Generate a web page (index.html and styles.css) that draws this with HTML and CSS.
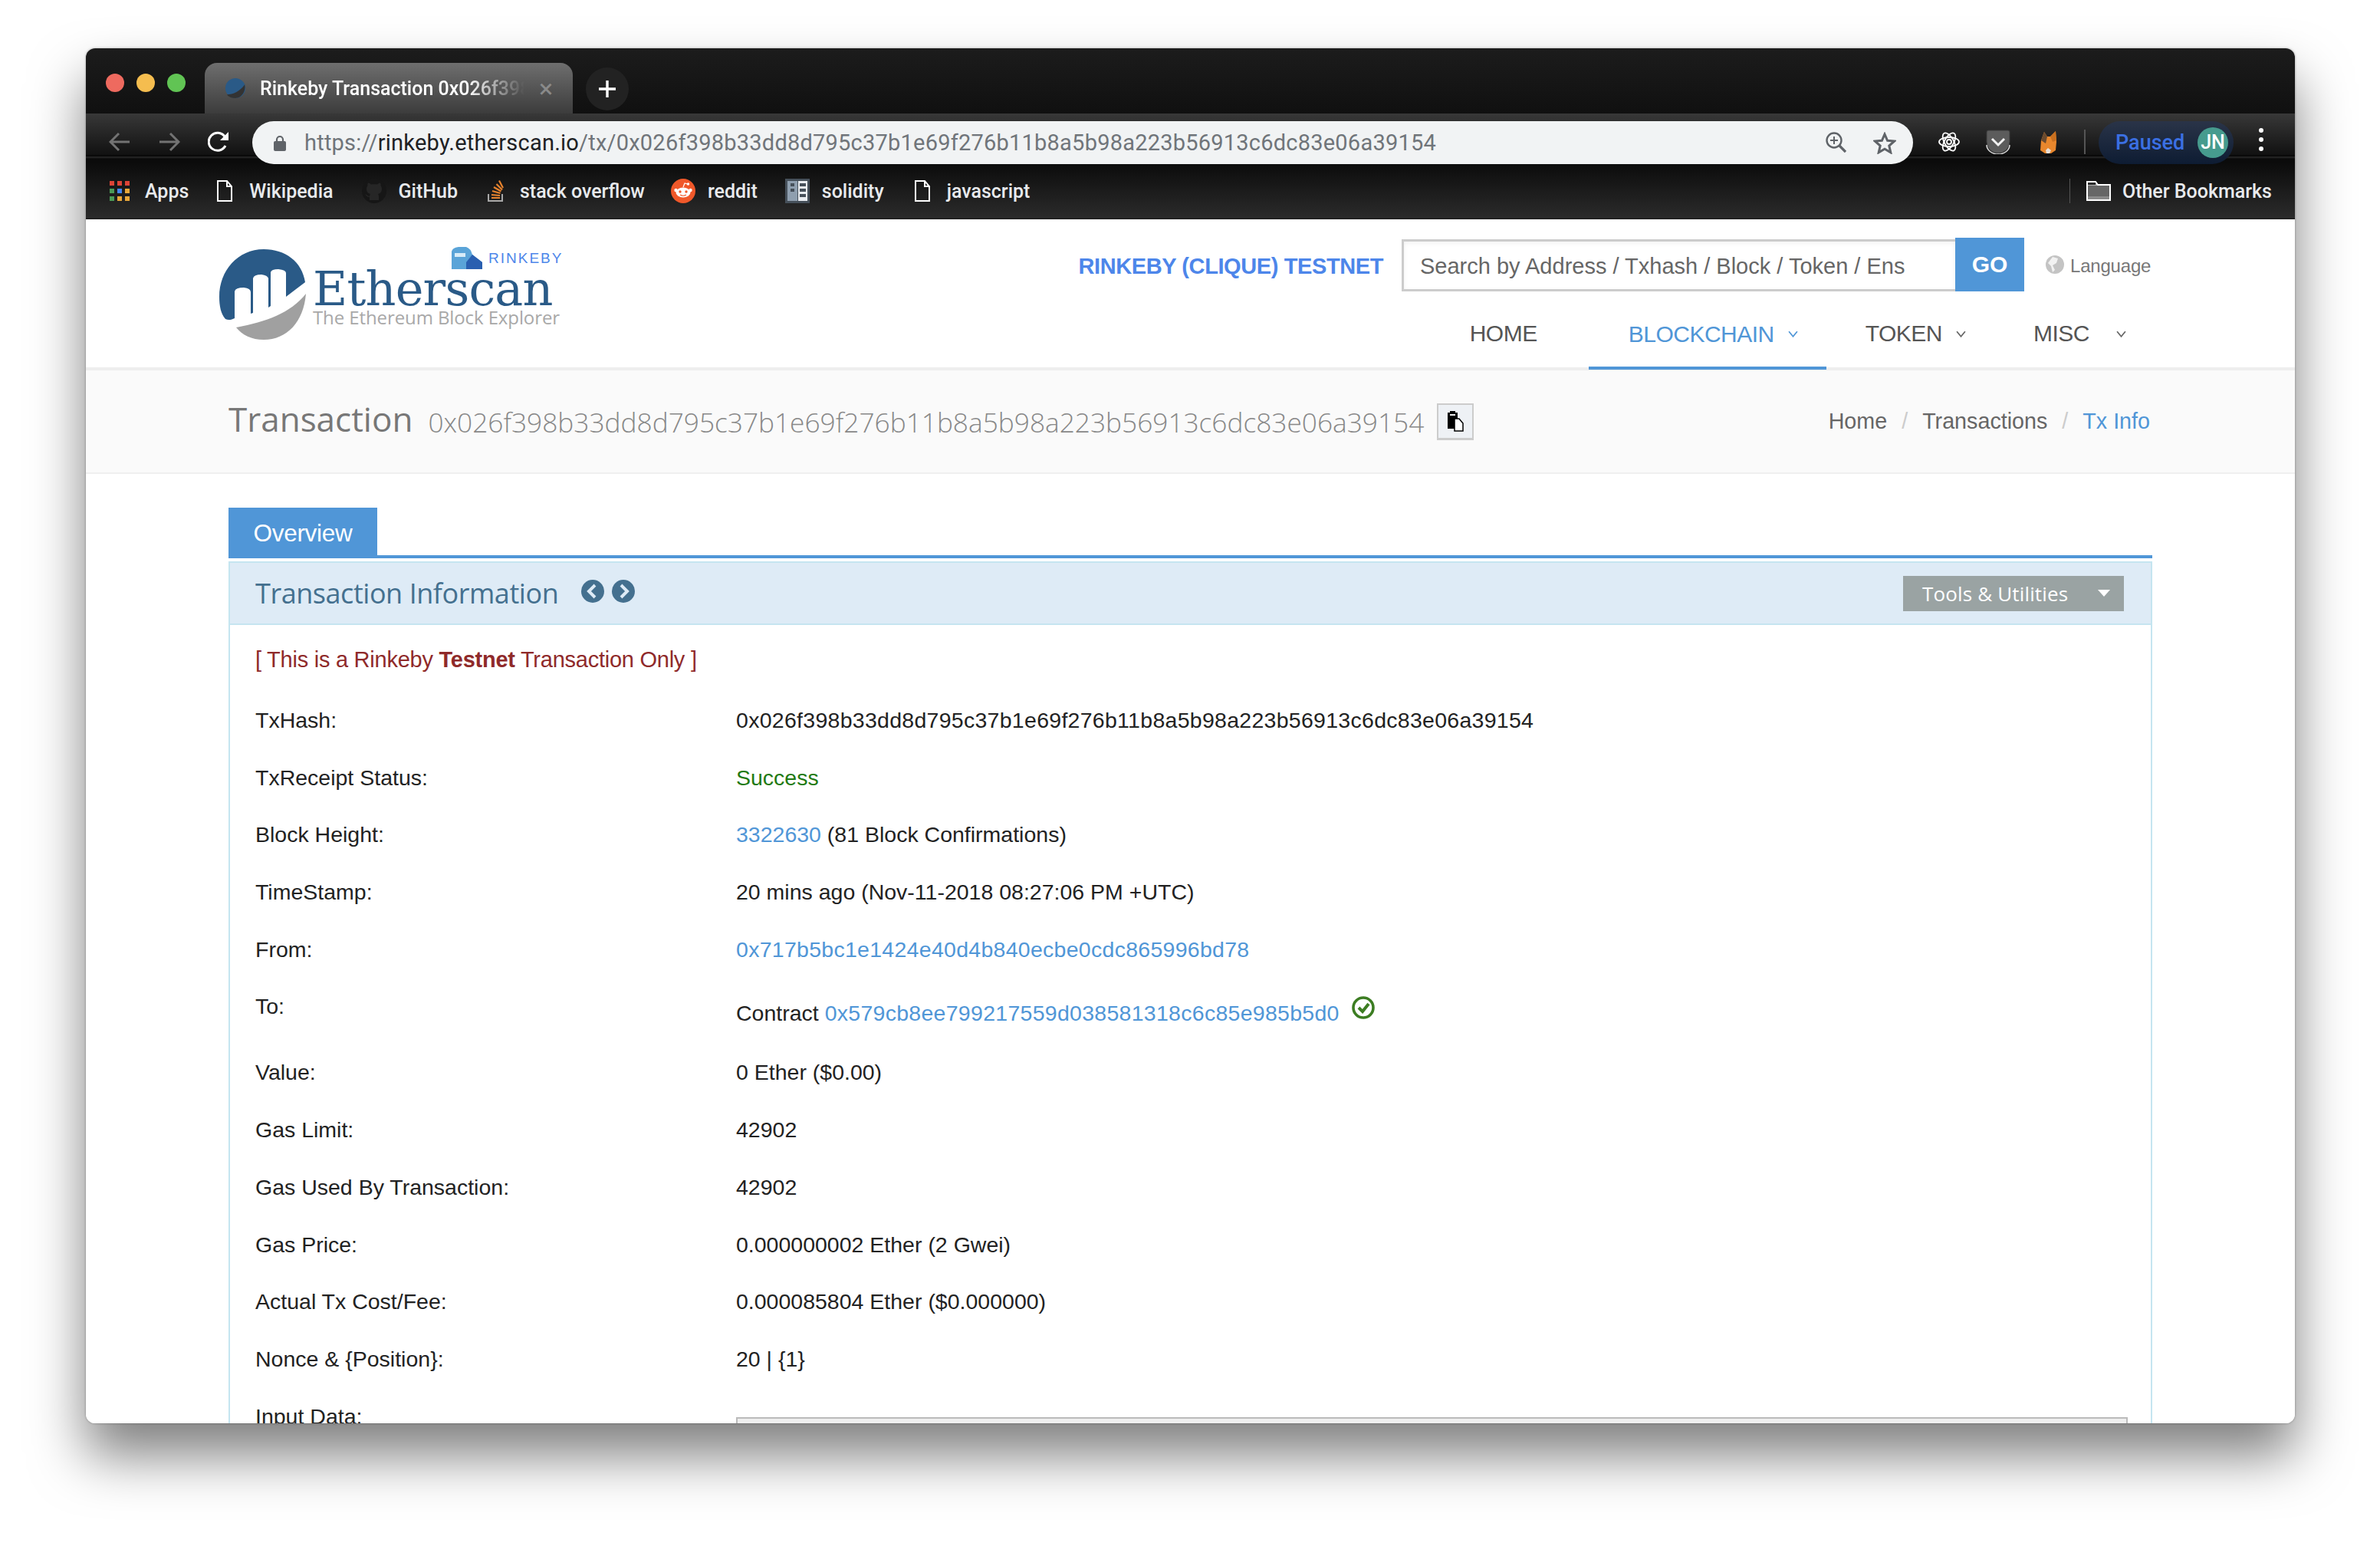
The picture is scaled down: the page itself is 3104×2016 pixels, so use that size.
FILE: index.html
```html
<!DOCTYPE html>
<html lang="en">
<head>
    <meta charset="UTF-8">
    <title>Rinkeby Transaction 0x026f398b33dd8d795c37b1e69f276b11b8a5b98a223b56913c6dc83e06a39154</title>
    <link rel="stylesheet" href="styles.css">
</head>
<body>
<div class="window">
    <div class="tabstrip">
        <span class="light red"></span>
        <span class="light yellow"></span>
        <span class="light green"></span>
        <div class="tab">
            <svg class="favicon" viewBox="0 0 30 32"><circle cx="15" cy="16" r="14" fill="#2a5a87"/><path d="M3 25C12 25 22 20 28 11C30 20 24 30 15 30C10 30 6 28 3 25Z" fill="#333"/></svg>
            <span class="tab-title">Rinkeby Transaction 0x026f398b33dd8d795c37b1e69f276b11b8</span>
            <span class="tab-close">×</span>
        </div>
        <div class="newtab"><svg viewBox="0 0 24 24" width="24" height="24"><path d="M12 1V23M1 12H23" stroke="#fff" stroke-width="3.4"/></svg></div>
    </div>

    <div class="toolbar">
        <svg class="tool-icon back" viewBox="0 0 28 26"><path d="M27 13H2M13 2L2 13L13 24" fill="none" stroke="#737373" stroke-width="3"/></svg>
        <svg class="tool-icon forward" viewBox="0 0 28 26"><path d="M1 13H26M15 2L26 13L15 24" fill="none" stroke="#737373" stroke-width="3"/></svg>
        <svg class="tool-icon reload" viewBox="0 0 28 28"><path d="M23 19A11.500 11.500 0 1 1 22 7" fill="none" stroke="#fff" stroke-width="3"/><path d="M27 1V12H16Z" fill="#fff"/></svg>
        <div class="omnibox">
            <svg class="lock" viewBox="0 0 16 21"><path d="M4 9V6A4 4 0 0 1 12 6V9" fill="none" stroke="#5f6368" stroke-width="2.200"/><rect y="8" width="16" height="13" rx="2" fill="#5f6368"/></svg>
            <span class="url"><span class="url-dim">https://</span>rinkeby.etherscan.io<span class="url-dim">/tx/0x026f398b33dd8d795c37b1e69f276b11b8a5b98a223b56913c6dc83e06a39154</span></span>
            <svg class="zoom-icon" viewBox="0 0 27 28"><circle cx="11" cy="11" r="9.500" fill="none" stroke="#5f6368" stroke-width="2.400"/><path d="M11 6V16M6 11H16" stroke="#5f6368" stroke-width="2"/><path d="M18 18L26 26" stroke="#5f6368" stroke-width="3.200"/></svg>
            <svg class="star-icon" viewBox="0 0 30 29"><path d="M15 3L18.600 11.300L27.500 12.100L20.800 18L22.800 26.800L15 22.200L7.200 26.800L9.200 18L2.500 12.100L11.400 11.300Z" fill="none" stroke="#5f6368" stroke-width="3"/></svg>
        </div>
        <svg class="ext react" viewBox="0 0 28 32"><g fill="none" stroke="#fff" stroke-width="1.800"><ellipse cx="14" cy="16" rx="13" ry="6"/><ellipse cx="14" cy="16" rx="13" ry="6" transform="rotate(60 14 16)"/><ellipse cx="14" cy="16" rx="13" ry="6" transform="rotate(120 14 16)"/><circle cx="14" cy="16" r="3"/></g></svg>
        <svg class="ext pocket" viewBox="0 0 32 32"><path d="M1 3Q1 1 3 1H29Q31 1 31 3V16A15 15 0 0 1 1 16Z" fill="#5c5c5c" stroke="#3a3a3a"/><path d="M1 20A15 12 0 0 0 31 20" fill="none" stroke="#ddd" stroke-width="1.500"/><path d="M8 12L16 20L24 12" fill="none" stroke="#f2f2f2" stroke-width="3"/></svg>
        <svg class="ext fox" viewBox="0 0 24 32"><path d="M2 27L3 14L7 3L11 9H15L22 2L23 16L22 27L16 31H8Z" fill="#e8872d"/><path d="M7 3L11 9L9 18L3 14Z" fill="#6b4b2f"/><path d="M22 2L15 9L18 16L23 14Z" fill="#c9701f"/><path d="M9 27L12 24L16 27L14 31H10Z" fill="#e8e0d8"/></svg>
        <span class="toolbar-sep"></span>
        <div class="paused">
            <span class="paused-label">Paused</span>
            <span class="avatar">JN</span>
        </div>
        <div class="menu-dots"><i></i><i></i><i></i></div>
    </div>

    <div class="bookmarks">
        <a class="bm bm-apps">
            <svg class="bm-icon" viewBox="0 0 26 26"><g>
                <rect width="6" height="6" fill="#db4437"/><rect x="10" width="6" height="6" fill="#db4437"/><rect x="20" width="6" height="6" fill="#db4437"/>
                <rect y="10" width="6" height="6" fill="#4b9b57"/><rect x="10" y="10" width="6" height="6" fill="#4285f4"/><rect x="20" y="10" width="6" height="6" fill="#e8a73a"/>
                <rect y="20" width="6" height="6" fill="#4b9b57"/><rect x="10" y="20" width="6" height="6" fill="#e8a73a"/><rect x="20" y="20" width="6" height="6" fill="#e8a73a"/>
            </g></svg>
            Apps
        </a>
        <a class="bm bm-wiki">
            <svg class="bm-icon doc" viewBox="0 0 20 28"><path d="M1 1H13L19 8V27H1Z M13 1V8H19" fill="none" stroke="#fff" stroke-width="2"/></svg>
            Wikipedia
        </a>
        <a class="bm bm-github">
            <svg class="bm-icon gh" viewBox="0 0 32 32"><circle cx="16" cy="16" r="16" fill="#161616"/><path d="M10 28V24C6 24 5 21 4 20C7 21 8 23 10 23C10 21 11 20 11 20C7 19 6 16 6 13C6 11 7 10 7.500 9C7 7 8 5.500 8 5.500C10 5.500 11 7 12 7.500C14 7 18 7 20 7.500C21 7 22 5.500 24 5.500C24 5.500 25 7 24.500 9C25 10 26 11 26 13C26 16 25 19 21 20C21.500 21 22 22 22 24V28Z" fill="#262626"/></svg>
            GitHub
        </a>
        <a class="bm bm-so">
            <svg class="bm-icon so" viewBox="0 0 22 30"><path d="M1 19V28H19V19" fill="none" stroke="#a8a8a8" stroke-width="2"/><path d="M5 24H16M5 20L16 21M6 15L16.500 18M8 10L17.500 15.500M11.500 6L19 13.500M15 1.500L20 11" fill="none" stroke="#e6822d" stroke-width="2.200"/></svg>
            stack overflow
        </a>
        <a class="bm bm-reddit">
            <svg class="bm-icon rd" viewBox="0 0 32 32"><circle cx="16" cy="16" r="16" fill="#f0582a"/><ellipse cx="16" cy="18" rx="9.500" ry="6.500" fill="#fff"/><circle cx="6.500" cy="15" r="2.200" fill="#fff"/><circle cx="25.500" cy="15" r="2.200" fill="#fff"/><circle cx="12" cy="17" r="1.700" fill="#f0582a"/><circle cx="20" cy="17" r="1.700" fill="#f0582a"/><path d="M12 21Q16 23.500 20 21" fill="none" stroke="#f0582a" stroke-width="1.200"/><path d="M16 11L18 6L22 7" fill="none" stroke="#fff" stroke-width="1.200"/><circle cx="22.500" cy="7" r="1.700" fill="#fff"/></svg>
            reddit
        </a>
        <a class="bm bm-sol">
            <svg class="bm-icon sol" viewBox="0 0 32 32"><rect width="32" height="32" fill="#46505a"/><rect x="3" y="3" width="13" height="26" fill="#8f9faf"/><rect x="17" y="3" width="12" height="26" fill="#e9edf1"/><rect x="7" y="6" width="5" height="4" fill="#46505a"/><rect x="7" y="13" width="5" height="4" fill="#46505a"/><rect x="19" y="6" width="8" height="4" fill="#46505a"/><rect x="19" y="13" width="8" height="4" fill="#46505a"/><rect x="19" y="20" width="8" height="4" fill="#46505a"/></svg>
            solidity
        </a>
        <a class="bm bm-js">
            <svg class="bm-icon doc" viewBox="0 0 20 28"><path d="M1 1H13L19 8V27H1Z M13 1V8H19" fill="none" stroke="#fff" stroke-width="2"/></svg>
            javascript
        </a>
        <span class="bm-sep"></span>
        <a class="bm bm-other">
            <svg class="bm-icon folder" viewBox="0 0 32 26"><path d="M1 25V1H12L15 5H31V25Z" fill="#666" stroke="#fff" stroke-width="2"/><path d="M2 5H15" stroke="#fff" stroke-width="1"/><rect x="2" y="6" width="28" height="14" fill="#666"/><rect x="2" y="2" width="10" height="3" fill="#2a2a2a"/><rect x="2" y="20" width="28" height="4" fill="#8a8a8a"/></svg>
            Other Bookmarks
        </a>
    </div>

    <div class="page">
        <div class="site-head">
            <div class="logo">
                <svg class="logo-mark" viewBox="0 0 114 118">
                    <path d="M112 43C108 16 86 0 58 0C24 0 0 28 0 62C0 74 2 84 8 91C12 93 16 92 20 90V55Q21 50 32 50Q41 51 41 56V84L44 83V38Q45 33 55 33Q63 34 64 38V76L67 74V30Q68 26 77 26Q87 27 87 31V62Q100 52 112 43Z" fill="#2a5a87"/>
                    <path d="M113 58C110 95 88 118 58 118C42 118 30 112 22 102C62 94 92 84 113 58Z" fill="#a0a0a0"/>
                </svg>
                <div class="logo-text">
                    <div class="logo-net">
                        <svg class="train" viewBox="0 0 42 30"><path d="M1 29V6Q2 1 10 0H20Q26 2 28 10L41 20V29Z" fill="#5aa4d8"/><path d="M20 20L28 10L41 20V29H20Z" fill="#2a5fb0"/><rect x="5" y="8" width="14" height="5" fill="#d7ecf8"/></svg>
                        <span>RINKEBY</span>
                    </div>
                    <div class="logo-name">Etherscan</div>
                    <div class="logo-tag">The Ethereum Block Explorer</div>
                </div>
            </div>
            <div class="head-right">
                <div class="head-top">
                    <span class="net-name">RINKEBY (CLIQUE) TESTNET</span>
                    <div class="search">
                        <div class="search-input">Search by Address / Txhash / Block / Token / Ens</div>
                        <div class="search-go">GO</div>
                    </div>
                    <div class="language">
                        <svg viewBox="0 0 24 24" width="24" height="24"><circle cx="12" cy="12" r="12" fill="#c4c4c4"/><path d="M9 2L16 4L14 10L9 13L12 19L9 22L7 14L3 10Z" fill="#f2f2f2"/></svg>
                        <span class="language-label">Language</span>
                    </div>
                </div>
                <nav class="menu">
                    <a class="menu-item home">HOME</a>
                    <a class="menu-item active blockchain">BLOCKCHAIN <svg class="chev" viewBox="0 0 12 8"><path d="M1 1L6 7L11 1" fill="none" stroke="#5096d7" stroke-width="1.600"/></svg></a>
                    <a class="menu-item token">TOKEN <svg class="chev" viewBox="0 0 12 8"><path d="M1 1L6 7L11 1" fill="none" stroke="#666" stroke-width="1.600"/></svg></a>
                    <a class="menu-item misc">MISC <svg class="chev" viewBox="0 0 12 8"><path d="M1 1L6 7L11 1" fill="none" stroke="#666" stroke-width="1.600"/></svg></a>
                </nav>
            </div>
        </div>

        <div class="crumbbar">
            <h1 class="page-title">Transaction</h1>
            <span class="page-hash">0x026f398b33dd8d795c37b1e69f276b11b8a5b98a223b56913c6dc83e06a39154</span>
            <button class="copy-btn"><svg viewBox="0 0 22 28" width="22" height="28"><path d="M1 3H14V24H1Z" fill="#000"/><rect x="4" y="1" width="7" height="4" fill="#000"/><rect x="4" y="5" width="7" height="2" fill="#eee"/><path d="M10 11H16L21 17V27H10Z" fill="#fff" stroke="#000" stroke-width="1.500"/></svg></button>
            <div class="crumbs">
                <a>Home</a><span class="crumb-sep">/</span><a>Transactions</a><span class="crumb-sep">/</span><a class="crumb-on">Tx Info</a>
            </div>
        </div>

        <div class="content">
            <div class="tabs"><span class="tab-overview">Overview</span></div>
            <div class="panel">
                <div class="panel-head">
                    <span class="panel-title">Transaction Information</span>
                    <svg class="round-nav first" viewBox="0 0 30 30"><circle cx="15" cy="15" r="15" fill="#44708f"/><path d="M18 7L10 15L18 23" fill="none" stroke="#deebf6" stroke-width="4"/></svg>
                    <svg class="round-nav" viewBox="0 0 30 30"><circle cx="15" cy="15" r="15" fill="#44708f"/><path d="M12 7L20 15L12 23" fill="none" stroke="#deebf6" stroke-width="4"/></svg>
                    <button class="tools-btn">Tools &amp; Utilities <i class="caret"></i></button>
                </div>
                <div class="panel-body">
                    <p class="testnet-note">[ This is a Rinkeby <b>Testnet</b> Transaction Only ]</p>
                    <div class="row"><div class="label">TxHash:</div><div class="value hash">0x026f398b33dd8d795c37b1e69f276b11b8a5b98a223b56913c6dc83e06a39154</div></div>
                    <div class="row"><div class="label">TxReceipt Status:</div><div class="value ok">Success</div></div>
                    <div class="row"><div class="label">Block Height:</div><div class="value"><a class="link">3322630</a> (81 Block Confirmations)</div></div>
                    <div class="row"><div class="label">TimeStamp:</div><div class="value">20 mins ago (Nov-11-2018 08:27:06 PM +UTC)</div></div>
                    <div class="row"><div class="label">From:</div><div class="value hash"><a class="link">0x717b5bc1e1424e40d4b840ecbe0cdc865996bd78</a></div></div>
                    <div class="row row-to"><div class="label">To:</div><div class="value">Contract <a class="link hash">0x579cb8ee799217559d038581318c6c85e985b5d0</a><svg class="verified" viewBox="0 0 30 30"><circle cx="15" cy="15" r="13" fill="none" stroke="#3c7d22" stroke-width="3.600"/><path d="M9 15L14 20L22 10" fill="none" stroke="#3c7d22" stroke-width="4"/></svg></div></div>
                    <div class="row"><div class="label">Value:</div><div class="value">0 Ether ($0.00)</div></div>
                    <div class="row"><div class="label">Gas Limit:</div><div class="value">42902</div></div>
                    <div class="row"><div class="label">Gas Used By Transaction:</div><div class="value">42902</div></div>
                    <div class="row"><div class="label">Gas Price:</div><div class="value">0.000000002 Ether (2 Gwei)</div></div>
                    <div class="row"><div class="label">Actual Tx Cost/Fee:</div><div class="value">0.000085804 Ether ($0.000000)</div></div>
                    <div class="row"><div class="label">Nonce &amp; {Position}:</div><div class="value">20 | {1}</div></div>
                    <div class="row row-input"><div class="label">Input Data:</div><div class="value"><div class="input-box"></div></div></div>
                </div>
            </div>
        </div>
    </div>
</div>
</body>
</html>
```

FILE: styles.css
```css
* {
    box-sizing: border-box;
    margin: 0;
    padding: 0;
}

html, body {
    height: 2016px;
    overflow: hidden;
}

body {
    background: #fff;
    padding: 63px 111px 0 112px;
    font-family: 'Liberation Sans', Arial, sans-serif;
    color: #333;
}

a {
    text-decoration: none;
}

.window {
    height: 1793px;
    border-radius: 12px;
    overflow: hidden;
    background: #fff;
    box-shadow: 0 0 3px rgba(0, 0, 0, 0.35), 0 42px 70px rgba(0, 0, 0, 0.5);
}

/* browser chrome */
.tabstrip {
    height: 85px;
    display: flex;
    align-items: flex-start;
    padding-left: 26px;
    background: linear-gradient(#1c1c1c, #101010);
}

.light {
    width: 24px;
    height: 24px;
    border-radius: 50%;
    margin: 33px 16px 0 0;
}

.red { background: #ee6a5f; }
.yellow { background: #f5bd4f; }
.green { background: #61c454; }

.tab {
    width: 480px;
    height: 66px;
    margin: 19px 0 0 9px;
    padding: 0 18px 0 26px;
    display: flex;
    align-items: center;
    border-radius: 16px 16px 0 0;
    background: linear-gradient(#6e6e6e, #3c3c3c);
}

.favicon {
    width: 28px;
    height: 32px;
    flex: none;
}

.tab-title {
    width: 350px;
    margin-left: 18px;
    overflow: hidden;
    white-space: nowrap;
    font: 500 25px Roboto, sans-serif;
    color: #fff;
    -webkit-mask-image: linear-gradient(to right, #000 270px, transparent 345px);
    mask-image: linear-gradient(to right, #000 270px, transparent 345px);
}

.tab-close {
    margin-left: 14px;
    font: 34px/1 Roboto, sans-serif;
    color: #8a8a8a;
}

.newtab {
    width: 56px;
    height: 56px;
    margin: 25px 0 0 17px;
    border-radius: 50%;
    background: #222;
    display: flex;
    align-items: center;
    justify-content: center;
}

.toolbar {
    height: 66px;
    display: flex;
    align-items: flex-start;
    background: linear-gradient(#383838 0, #111 54px, #000 55px, #2a2a2a 57px, #0a0a0a 59px, #0c0c0c 100%);
}

.tool-icon {
    margin-top: 24px;
    height: 26px;
}

.back { width: 28px; margin-left: 30px; }
.forward { width: 28px; margin-left: 37px; }
.reload { width: 28px; height: 28px; margin-left: 36px; margin-top: 23px; }

.omnibox {
    width: 2166px;
    height: 56px;
    margin: 10px 0 0 30px;
    padding: 0 22px 0 28px;
    display: flex;
    align-items: center;
    border-radius: 28px;
    background: #f1f3f4;
}

.lock {
    width: 16px;
    height: 21px;
    flex: none;
}

.url {
    margin-left: 24px;
    white-space: nowrap;
    font: 29px Roboto, sans-serif;
    letter-spacing: 0.220px;
    color: #202124;
}

.url-dim {
    color: #70757a;
}

.zoom-icon {
    width: 27px;
    height: 28px;
    margin-left: auto;
}

.star-icon {
    width: 30px;
    height: 29px;
    margin-left: 35px;
}

.ext {
    height: 32px;
    margin-top: 21px;
    flex: none;
}

.react { width: 28px; margin-left: 33px; }
.pocket { width: 32px; margin-left: 34px; }
.fox { width: 24px; margin-left: 37px; }

.toolbar-sep {
    width: 2px;
    height: 32px;
    margin: 21px 0 0 35px;
    background: #555;
}

.paused {
    width: 176px;
    height: 56px;
    margin: 10px 0 0 17px;
    padding: 0 7px 0 22px;
    display: flex;
    align-items: center;
    justify-content: space-between;
    border-radius: 28px;
    background: linear-gradient(#2a3448, #0e1c33);
}

.paused-label {
    font: 500 27px Roboto, sans-serif;
    color: #3b70e3;
}

.avatar {
    width: 40px;
    height: 40px;
    border-radius: 50%;
    background: #469b8e;
    color: #fff;
    font: 500 25px/40px Roboto, sans-serif;
    text-align: center;
}

.menu-dots {
    margin: 19px 0 0 33px;
    width: 6px;
    display: flex;
    flex-direction: column;
    gap: 6px;
}

.menu-dots i {
    width: 6px;
    height: 6px;
    border-radius: 50%;
    background: #fff;
}

.bookmarks {
    height: 72px;
    display: flex;
    align-items: center;
    padding: 0 30px 0 31px;
    background: linear-gradient(#0c0c0c, #2b2b2b);
    border-bottom: 2px solid #222;
}

.bm {
    display: flex;
    align-items: center;
    white-space: nowrap;
    font: 500 25px Roboto, sans-serif;
    color: #e8eaed;
}

.bm-icon {
    flex: none;
    margin-right: 20px;
    width: 26px;
    height: 26px;
}

.bm-icon.doc { width: 20px; height: 28px; margin-right: 22px; }
.bm-icon.gh { width: 32px; height: 32px; margin-right: 16px; }
.bm-icon.so { width: 22px; height: 30px; margin-right: 20px; }
.bm-icon.rd { width: 32px; height: 32px; margin-right: 16px; }
.bm-icon.sol { width: 32px; height: 32px; margin-right: 16px; }
.bm-icon.folder { width: 32px; height: 26px; margin-right: 15px; }

.bm-wiki { margin-left: 37px; }
.bm-github { margin-left: 37px; }
.bm-so { margin-left: 39px; }
.bm-reddit { margin-left: 34px; }
.bm-sol { margin-left: 36px; }
.bm-js { margin-left: 40px; }

.bm-sep {
    width: 1px;
    height: 32px;
    margin: 0 21px 0 auto;
    background: #555;
}

/* etherscan page */
.page {
    height: 1570px;
    background: #fff;
}

.site-head {
    height: 197px;
    display: flex;
    padding: 0 185px 0 174px;
    border-bottom: 4px solid #eee;
}

.logo {
    display: flex;
    align-items: flex-start;
}

.logo-mark {
    width: 114px;
    height: 118px;
    margin-top: 39px;
    flex: none;
}

.logo-text {
    margin: 36px 0 0 8px;
    width: 330px;
}

.logo-net {
    display: flex;
    align-items: center;
    height: 30px;
    padding-left: 180px;
    font-size: 19px;
    letter-spacing: 2px;
    color: #4d86ea;
}

.train {
    width: 42px;
    height: 30px;
    margin-right: 7px;
}

.logo-name {
    font: 62px/50px 'DejaVu Serif', serif;
    letter-spacing: -0.800px;
    white-space: nowrap;
    color: #2a5a87;
}

.logo-tag {
    margin-top: -2px;
    font: 24px/28px 'Open Sans', sans-serif;
    letter-spacing: -0.100px;
    color: #a8a8a8;
}

.head-right {
    margin-left: auto;
    display: flex;
    flex-direction: column;
    align-items: flex-end;
}

.head-top {
    display: flex;
    align-items: center;
    margin-top: 24px;
    height: 70px;
}

.net-name {
    font-size: 29px;
    font-weight: bold;
    letter-spacing: -0.400px;
    color: #4d86ea;
    margin-right: 24px;
    padding-top: 5px;
}

.search {
    display: flex;
    align-items: stretch;
    height: 70px;
}

.search-input {
    width: 722px;
    height: 68px;
    margin-top: 2px;
    padding: 0 21px;
    border: 3px solid #ccc;
    border-right: 0;
    box-shadow: inset 0 2px 6px rgba(0, 0, 0, 0.06);
    font-size: 29px;
    line-height: 64px;
    color: #666;
}

.search-go {
    width: 90px;
    background: #5096d7;
    color: #fff;
    font-size: 30px;
    font-weight: bold;
    line-height: 70px;
    text-align: center;
}

.language {
    display: flex;
    align-items: center;
    gap: 8px;
    margin-left: 28px;
    width: 140px;
    font-size: 24px;
    color: #777;
    letter-spacing: -0.200px;
}

.language-label {
    padding-top: 3px;
}

.menu {
    display: flex;
    align-items: center;
    height: 99px;
}

.menu-item {
    display: flex;
    align-items: center;
    height: 99px;
    padding-top: 11px;
    font-size: 30px;
    letter-spacing: -0.500px;
    color: #555;
}

.menu-item.home { margin-right: 67px; }
.menu-item.blockchain {
    width: 310px;
    padding-left: 52px;
    color: #5096d7;
    border-bottom: 4px solid #5096d7;
    margin-bottom: -4px;
    margin-top: 1px;
    margin-right: 51px;
}
.menu-item.token { margin-right: 88px; }
.menu-item.misc { margin-right: 35px; }
.menu-item.misc .chev { margin-left: 35px; }

.chev {
    width: 13px;
    height: 9px;
    margin-left: 18px;
}

.crumbbar {
    height: 135px;
    display: flex;
    align-items: center;
    padding: 0 189px 0 186px;
    background: #fafafa;
    border-bottom: 2px solid #f0f0f0;
}

.page-title {
    font: 44px 'Open Sans', sans-serif;
    color: #777;
    margin-top: -7px;
}

.page-hash {
    margin-left: 20px;
    font: 300 35.250px 'Open Sans', sans-serif;
    color: #888;
}

.copy-btn {
    width: 48px;
    height: 48px;
    margin-left: 17px;
    border: 2px solid #ccc;
    border-bottom-width: 3px;
    background: #eef1f5;
    display: flex;
    align-items: center;
    justify-content: center;
}

.crumbs {
    margin-left: auto;
    font-size: 28.700px;
    color: #666;
}

.crumb-sep {
    margin: 0 19px;
    color: #ccc;
}

.crumb-on {
    color: #5096d7;
}

.content {
    padding: 44px 186px 0 186px;
}

.tabs {
    height: 66px;
    border-bottom: 4px solid #5096d7;
}

.tab-overview {
    display: inline-block;
    width: 194px;
    height: 62px;
    background: #5096d7;
    color: #fff;
    font-size: 31.500px;
    line-height: 66px;
    letter-spacing: -0.300px;
    text-align: center;
}

.panel {
    margin-top: 4px;
    border: 2px solid #c5e5f0;
    border-bottom: 0;
}

.panel-head {
    height: 81px;
    display: flex;
    align-items: center;
    padding: 0 35px 0 33px;
    background: #deebf6;
    border-bottom: 2px solid #c5e5f0;
}

.panel-title {
    font: 36px 'Open Sans', sans-serif;
    letter-spacing: -0.450px;
    color: #44708f;
}

.round-nav {
    width: 30px;
    height: 30px;
    margin: -6px 0 0 10px;
}

.round-nav.first {
    margin-left: 30px;
}

.tools-btn {
    margin-left: auto;
    width: 288px;
    height: 46px;
    border: 0;
    padding: 0 18px 0 25px;
    display: flex;
    align-items: center;
    justify-content: space-between;
    background: #9aa3a3;
    color: #fff;
    font: 26px 'Open Sans', sans-serif;
    letter-spacing: 0.150px;
}

.caret {
    width: 0;
    height: 0;
    border: 8px solid transparent;
    border-top: 9px solid #fff;
    border-bottom: 0;
}

.panel-body {
    padding: 28px 35px 0 33px;
    font-size: 28.500px;
}

.testnet-note {
    height: 34px;
    font-size: 29px;
    line-height: 34px;
    color: #8f2a2a;
    letter-spacing: -0.250px;
}

.row {
    display: flex;
    height: 74.700px;
    line-height: 34px;
    color: #222;
}

.testnet-note + .row {
    margin-top: 45px;
}

.label {
    width: 627px;
    flex: none;
}

.value {
    flex: 1;
}

.hash {
    letter-spacing: 0.280px;
}

.row-to {
    height: 86px;
}

.row-to .value {
    padding-top: 4px;
}

.row-input .value {
    padding-top: 18px;
}

.ok {
    color: #1f7a12;
}

.link {
    color: #5096d7;
}

.verified {
    width: 30px;
    height: 30px;
    margin-left: 16px;
    vertical-align: 2px;
}

.input-box {
    height: 80px;
    margin-right: -5px;
    border: 2px solid #bbb;
    background: #eee;
}
```
